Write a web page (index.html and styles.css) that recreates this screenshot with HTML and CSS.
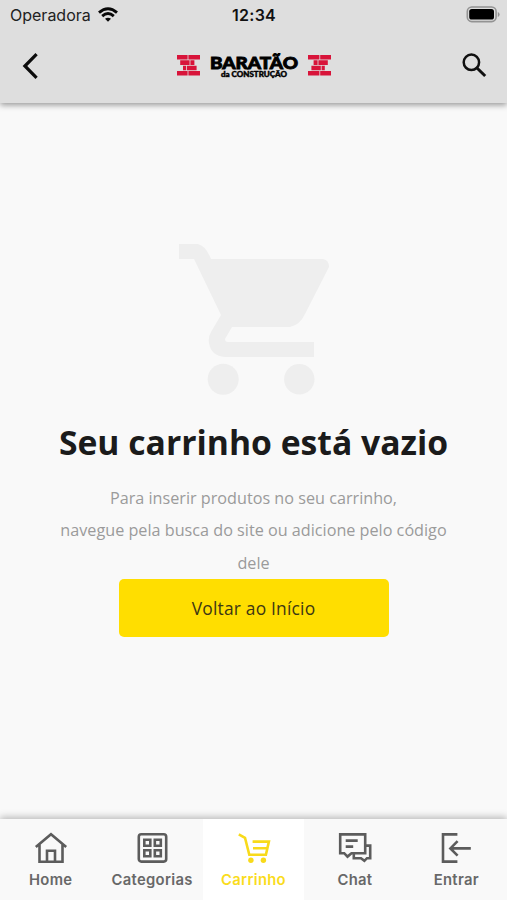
FILE: index.html
```
<!DOCTYPE html>
<html lang="pt-BR">
<head>
  <meta charset="UTF-8">
  <meta name="viewport" content="width=device-width, initial-scale=1">
  <title>Carrinho</title>
  <link rel="stylesheet" href="styles.css">
</head>
<body>

<header class="header">
  <div class="status">
    <div class="carrier">
      <span>Operadora</span>
      <svg width="20" height="15" viewBox="0 0 20 15">
        <g fill="none" stroke="#080808" stroke-width="2.9">
          <path d="M1 5.6Q10 -2.2 19 5.6"/>
          <path d="M4.2 9.2Q10 4 15.8 9.2"/>
        </g>
        <path d="M7 11.8Q10 9.6 13 11.8L10 14.8Z" fill="#080808"/>
      </svg>
    </div>
    <span class="time">12:34</span>
    <svg class="battery" width="34" height="17" viewBox="0 0 34 17">
      <rect x="1.3" y="1" width="28.8" height="14.6" rx="4.5" fill="none" stroke="#939393" stroke-width="1.6"/>
      <rect x="3.2" y="3" width="24.8" height="10.6" rx="2.6" fill="#000"/>
      <path d="M31.8 6v5q1.8-.7 1.8-2.5T31.8 6z" fill="#939393"/>
    </svg>
  </div>

  <div class="nav">
    <button class="icon-btn" aria-label="Voltar">
      <svg width="18" height="28" viewBox="0 0 18 28">
        <path d="M14.6 2.2L2.9 14l11.7 11.8" fill="none" stroke="#0c0c0c" stroke-width="3.2"/>
      </svg>
    </button>

    <div class="logo">
      <svg width="23" height="22" viewBox="0 0 23 22">
        <path d="M0 0h10.6v4.5H0zM11.4 0H23v4.5H11.4zM3.2 5.3h9.4v4.6H3.2zM13.4 5.3h4v4.6h-4zM6 10.7h3.2v4.5H6zM10 10.7h9.6v4.5H10zM0 16h10.6v4.6H0zM11.4 16H23v4.6H11.4z" fill="#d8143a"/>
      </svg>
      <svg width="90" height="30" viewBox="0 0 90 30">
        <text class="logo-name" x="1" y="18.2" textLength="88" lengthAdjust="spacingAndGlyphs">BARATÃO</text>
        <text class="logo-sub" x="12" y="26" textLength="66" lengthAdjust="spacingAndGlyphs">da CONSTRUÇÃO</text>
      </svg>
      <svg width="23" height="22" viewBox="0 0 23 22">
        <path d="M0 0h11.4v4.5H0zM12.2 0H23v4.5H12.2zM5.6 5.3h4v4.6h-4zM10.4 5.3h9.4v4.6h-9.4zM3.4 10.7h9.4v4.5H3.4zM13.6 10.7h3.2v4.5h-3.2zM0 16h11.4v4.6H0zM12.2 16H23v4.6H12.2z" fill="#d8143a"/>
      </svg>
    </div>

    <button class="icon-btn" aria-label="Buscar">
      <svg width="25" height="25" viewBox="0 0 25 25">
        <circle cx="9.4" cy="9.3" r="7.7" fill="none" stroke="#101010" stroke-width="2.5"/>
        <path d="M15 15l8.2 8" stroke="#101010" stroke-width="3"/>
      </svg>
    </button>
  </div>
</header>

<main class="empty">
  <svg class="empty-cart" width="152" height="151" viewBox="0 0 152 151" fill="#eee">
    <path d="M1 0h19q8 2 13 15h112q6 1 6 8l-24 47q-5 11-15 13H54l-7 12q0 3 3 3h86v15H47Q33 112 31 99q-1-6 2-11l10-17L16 15H1z"/>
    <circle cx="45.2" cy="135.3" r="15.5"/>
    <circle cx="121.3" cy="135.3" r="15.2"/>
  </svg>
  <h1>Seu carrinho está vazio</h1>
  <p>Para inserir produtos no seu carrinho,<br>navegue pela busca do site ou adicione pelo código<br>dele</p>
  <button class="home-btn">Voltar ao Início</button>
</main>

<nav class="tabs">
  <a class="tab">
    <svg width="34" height="34" viewBox="0 0 34 34">
      <path d="M1.8 16L17 3.2 32.2 16M5.5 13v17.8h23V13M13 30.5V19.8h8v10.7"/>
    </svg>
    <span>Home</span>
  </a>
  <a class="tab">
    <svg width="34" height="34" viewBox="0 0 34 34">
      <rect x="3.8" y="3.2" width="27.4" height="27.4" rx="2.5"/>
      <path d="M9.3 8.7h6v6h-6zM19.8 8.7h6v6h-6zM9.3 19.2h6v6h-6zM19.8 19.2h6v6h-6z"/>
    </svg>
    <span>Categorias</span>
  </a>
  <a class="tab active">
    <svg width="34" height="34" viewBox="0 0 34 34">
      <path d="M1.8 3.4L8 6.8l4.3 17h16.6l3-13.2H15.6M16 17.2h13.6"/>
      <circle class="wheel" cx="13.9" cy="29.3" r="2.7"/>
      <circle class="wheel" cx="26.4" cy="29.3" r="2.7"/>
    </svg>
    <span>Carrinho</span>
  </a>
  <a class="tab">
    <svg width="34" height="34" viewBox="0 0 34 34">
      <path d="M2.2 3.4h25v18.8H13.5l-4 3.4-3.3-3.4h-4zM7.7 9.6h12M7.7 15.6h7.5M27.2 14.6h5v12.6H29l-2.6 2.6-3.4-2.6h-7.2v-5"/>
    </svg>
    <span>Chat</span>
  </a>
  <a class="tab">
    <svg width="34" height="34" viewBox="0 0 34 34">
      <path d="M18.4 3.4H4v27.2h14.4M31.8 17.4H12M18.6 10.2l-7.2 7.2 7.2 7.2"/>
    </svg>
    <span>Entrar</span>
  </a>
</nav>

</body>
</html>
```
FILE: styles.css
```
:root {
  --bg: #f9f9f9;
  --header-bg: #dedede;
  --primary: #ffde00;
  --icon: #5c5c5c;
}
* { margin: 0; padding: 0; box-sizing: border-box; }
body {
  font-family: 'Open Sans', sans-serif;
  background: var(--bg);
  height: 100vh;
  display: flex;
  flex-direction: column;
  overflow: hidden;
}
button {
  border: none;
  background: none;
  cursor: pointer;
}
svg {
  display: block;
  flex: none;
}
.header {
  height: 103px;
  background: var(--header-bg);
  box-shadow: 0 2px 6px rgba(0,0,0,0.4);
}
.status {
  height: 29px;
  padding: 0 7px 0 10px;
  display: grid;
  grid-template-columns: 1fr auto 1fr;
  align-items: center;
  font-family: Inter, sans-serif;
  font-size: 16px;
  color: #222;
}
.carrier {
  display: flex;
  align-items: center;
  gap: 7px;
}
.time {
  margin-right: 2px;
  font-weight: 600;
  letter-spacing: 0.3px;
  color: #111;
}
.battery {
  justify-self: end;
}
.nav {
  height: 73px;
  padding: 0 20px 0 22px;
  display: flex;
  align-items: center;
  justify-content: space-between;
}
.logo {
  display: flex;
  align-items: center;
  gap: 9px;
  padding-left: 6px;
}
.logo-name {
  font-family: Lato, sans-serif;
  font-weight: 900;
  font-size: 17px;
  stroke: #000;
  stroke-width: 0.9px;
}
.logo-sub {
  font-family: Lato, sans-serif;
  font-weight: 900;
  font-size: 7px;
  stroke: #000;
  stroke-width: 0.4px;
}
.empty {
  flex: 1;
  padding-top: 141px;
  display: flex;
  flex-direction: column;
  align-items: center;
  text-align: center;
}
h1 {
  margin-top: 23px;
  font-size: 33.7px;
  line-height: 49px;
  color: #1b1b1b;
  white-space: nowrap;
}
p {
  margin-top: 15px;
  font-size: 16.2px;
  line-height: 32.4px;
  color: #9b9b9b;
  white-space: nowrap;
}
.home-btn {
  width: 270px;
  height: 58px;
  padding-bottom: 1px;
  border-radius: 5px;
  background: var(--primary);
  font-family: inherit;
  font-size: 17.4px;
  font-weight: 500;
  letter-spacing: 0.2px;
  color: #3d3714;
}
.tabs {
  height: 81px;
  display: flex;
  background: var(--bg);
  box-shadow: 0 -2px 7px rgba(0,0,0,0.26);
}
.tab {
  flex: 1;
  padding-top: 12px;
  display: flex;
  flex-direction: column;
  align-items: center;
  gap: 6px;
  font-family: Inter, sans-serif;
  font-size: 14.8px;
  font-weight: 600;
  line-height: 19px;
  letter-spacing: 0.3px;
  color: #686868;
}
.tab svg {
  fill: none;
  stroke: var(--icon);
  stroke-width: 2.6;
}
.tab.active {
  background: #fff;
  color: #fadc1c;
}
.tab.active svg {
  stroke: #f8da1a;
}
.tab .wheel {
  fill: #f8da1a;
  stroke: none;
}
```
